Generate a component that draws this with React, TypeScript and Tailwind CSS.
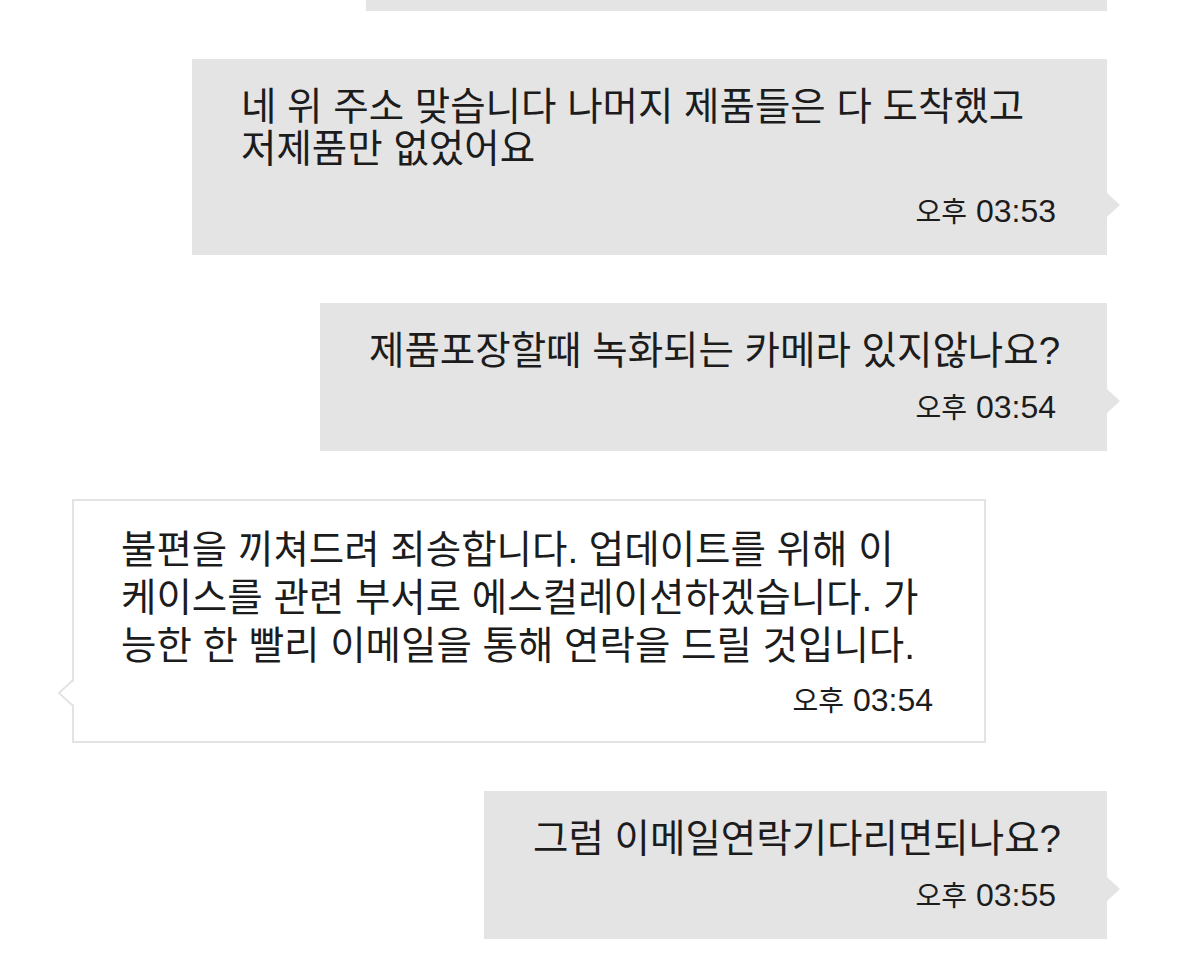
import React from 'react';

const FONT = { fontFamily: '"Liberation Sans", "Noto Sans CJK KR", sans-serif' };

interface Message {
    lines: string[];
    time: string;
    width: string;
    height: string;
}

function Time({ time }: { time: string }) {
    const [ampm, clock] = time.split(' ');
    return (
        <div className="text-right text-[32px] leading-[30px] text-[#1c1c1c] pr-[51px]">
            <span className="text-[28px]" style={{ fontFamily: '"Noto Sans CJK KR", sans-serif' }}>{ampm}</span> {clock}
        </div>
    );
}

function MyBubble({ msg }: { msg: Message }) {
    return (
        <div className={`relative bg-[#e4e4e4] flex flex-col justify-between pt-[27px] pb-[29px] ${msg.width} ${msg.height}`}>
            <div className="pl-[49px] text-[38.5px] leading-[42px] text-[#1c1c1c] whitespace-nowrap">
                {msg.lines.map((l, i) => <div key={i}>{l}</div>)}
            </div>
            <Time time={msg.time} />
            {/* tail */}
            <svg className="absolute right-[-13px] bottom-[38px]" width="13" height="24" viewBox="0 0 13 24">
                <polygon points="0,0 13,12 0,24" fill="#e4e4e4" />
            </svg>
        </div>
    );
}

function AgentBubble({ msg }: { msg: Message }) {
    return (
        <div className={`relative self-start bg-white border-2 border-[#e3e3e3] flex flex-col justify-between pt-[25px] pb-[26px] ${msg.width} ${msg.height}`}>
            <div className="pl-[47px] text-[38.5px] leading-[48px] text-[#1c1c1c] whitespace-nowrap">
                {msg.lines.map((l, i) => <div key={i}>{l}</div>)}
            </div>
            <Time time={msg.time} />
            <svg className="absolute left-[-17px] bottom-[35px]" width="17" height="26" viewBox="0 0 17 26">
                <polygon points="17,1 2,13 17,25" fill="#ffffff" />
                <polyline points="16,0 2,13 16,26" fill="none" stroke="#e3e3e3" strokeWidth="2" />
            </svg>
        </div>
    );
}

export default function App() {
    return (
        <div className="min-h-[960px] bg-white flex flex-col items-end gap-[48px] px-[72px]" style={FONT}>
            {/* previous message, scrolled off the top */}
            <div className="w-[741px] h-[11px] bg-[#e4e4e4]" />

            <MyBubble msg={{
                lines: ['네 위 주소 맞습니다 나머지 제품들은 다 도착했고', '저제품만 없었어요'],
                time: '오후 03:53',
                width: 'w-[915px]',
                height: 'h-[196px]',
            }} />

            <MyBubble msg={{
                lines: ['제품포장할때 녹화되는 카메라 있지않나요?'],
                time: '오후 03:54',
                width: 'w-[787px]',
                height: 'h-[148px]',
            }} />

            <AgentBubble msg={{
                lines: [
                    '불편을 끼쳐드려 죄송합니다. 업데이트를 위해 이',
                    '케이스를 관련 부서로 에스컬레이션하겠습니다. 가',
                    '능한 한 빨리 이메일을 통해 연락을 드릴 것입니다.',
                ],
                time: '오후 03:54',
                width: 'w-[914px]',
                height: 'h-[244px]',
            }} />

            <MyBubble msg={{
                lines: ['그럼 이메일연락기다리면되나요?'],
                time: '오후 03:55',
                width: 'w-[623px]',
                height: 'h-[148px]',
            }} />
        </div>
    );
}
